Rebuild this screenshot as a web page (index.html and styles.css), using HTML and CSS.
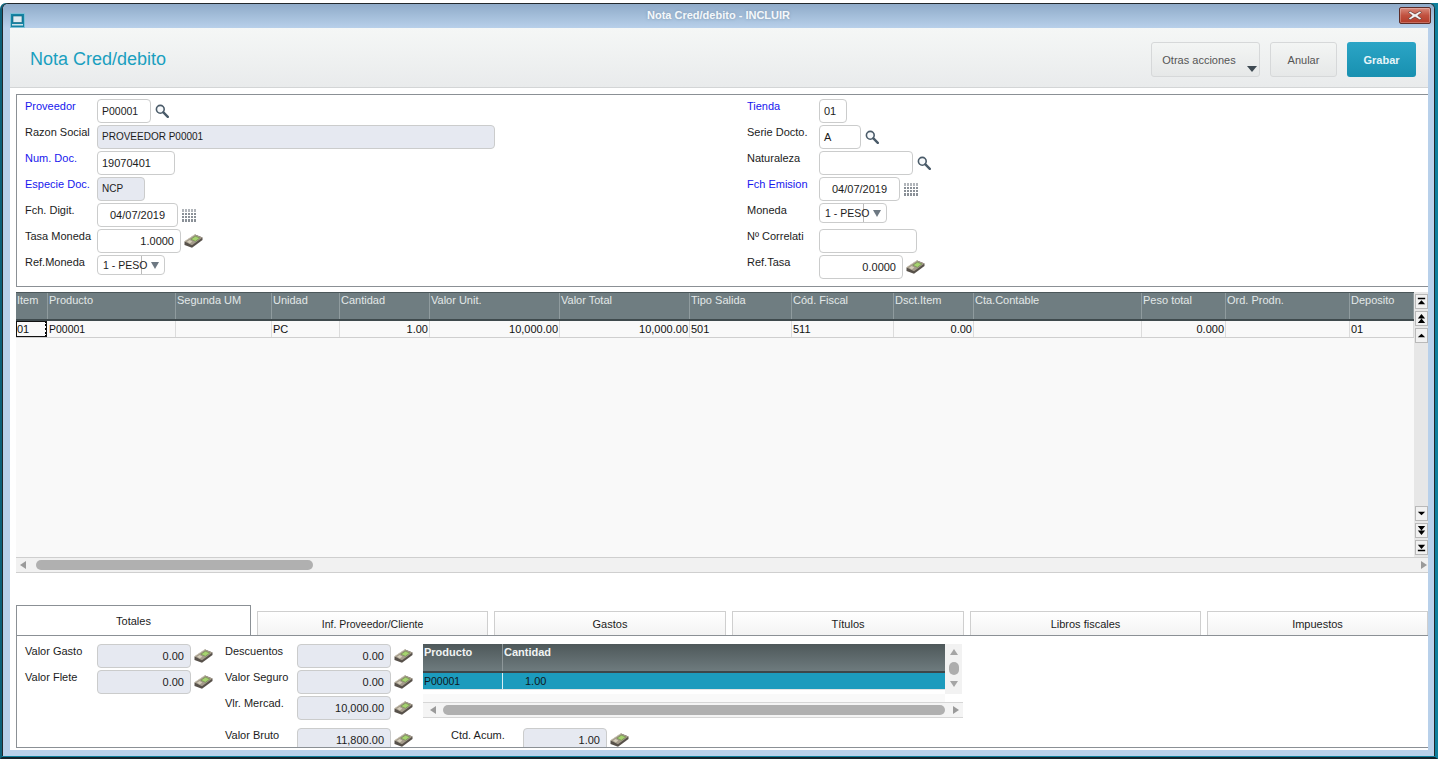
FILE: index.html
```html
<!DOCTYPE html>
<html lang="es">
<head>
<meta charset="utf-8">
<title>Nota Cred/debito - INCLUIR</title>
<link rel="stylesheet" href="styles.css">
</head>
<body>
<svg class="defs" width="0" height="0" aria-hidden="true">
  <symbol id="i-search" viewBox="0 0 14 14">
    <circle cx="5.300" cy="5.300" r="3.900" fill="#f7f9fb" stroke="#4a5b69" stroke-width="1.600"/>
    <path d="M8.400 8.400L12.800 12.800" stroke="#4a5b69" stroke-width="2.400" stroke-linecap="round"/>
  </symbol>
  <symbol id="i-money" viewBox="0 0 19 14">
    <path d="M.5 7.500L11 .5 18.500 3.500V6L8 13.800 .5 11z" fill="#57514a"/>
    <path d="M.5 7.500L11 .5 18.500 3.500 8 11.300z" fill="#a49b8b"/>
    <path d="M.5 7.500L11 .5" fill="none" stroke="#d8d2c2" stroke-width=".8"/>
    <path d="M7 5.200L11.300 2.200 15.800 4 11.400 7.300z" fill="#a6d36f" stroke="#6c8a4a" stroke-width=".6"/>
    <path d="M3 7.800l2.600-1.700 2.700 1.500-2.500 1.800z" fill="#d4cdb9"/>
  </symbol>
  <symbol id="i-cal" viewBox="0 0 14 13">
    <path d="M0 0h2v3H0zM3 0h2v3H3zM6 0h2v3H6zM9 0h2v3H9zM12 0h2v3h-2z" fill="#b1b5ba"/>
    <path d="M0 4h2v2H0zM3 4h2v2H3zM6 4h2v2H6zM9 4h2v2H9zM12 4h2v2h-2zM0 7h2v2H0zM3 7h2v2H3zM6 7h2v2H6zM9 7h2v2H9zM12 7h2v2h-2zM0 10h2v3H0zM3 10h2v3H3zM6 10h2v3H6zM9 10h2v3H9zM12 10h2v3h-2z" fill="#8a9097"/>
  </symbol>
  <symbol id="i-one-up" viewBox="0 0 12 12"><path d="M2 8h8L6 4z" fill="#000"/></symbol>
  <symbol id="i-one-down" viewBox="0 0 12 12"><path d="M2 4h8L6 8z" fill="#000"/></symbol>
  <symbol id="i-two-up" viewBox="0 0 12 12"><path d="M2 6h8L6 1zM2 11h8L6 6z" fill="#000"/></symbol>
  <symbol id="i-two-down" viewBox="0 0 12 12"><path d="M2 1h8L6 6zM2 6h8L6 11z" fill="#000"/></symbol>
  <symbol id="i-top" viewBox="0 0 12 12"><path d="M2 2h8v1.500H2zM2 9h8L6 4.500z" fill="#000"/></symbol>
  <symbol id="i-bottom" viewBox="0 0 12 12"><path d="M2 3h8L6 7.500zM2 8.500h8V10H2z" fill="#000"/></symbol>
</svg>

<div class="window">
  <div class="shell">
    <div class="titlebar">
      <span class="app-icon">
        <svg width="15" height="15" viewBox="0 0 15 15">
          <rect x="0.500" y="0.500" width="14" height="14" fill="#1584a4" stroke="#7fc0d6"/>
          <rect x="3" y="3" width="9" height="6.500" fill="#dfeaf0" stroke="#0c5f78" stroke-width="0.600"/>
          <path d="M2 11h11v1.500H2z" fill="#cfe2ea"/>
        </svg>
      </span>
      <span class="title">Nota Cred/debito - INCLUIR</span>
      <span class="close">
        <svg width="16" height="11" viewBox="0 0 14 10">
          <path d="M2.500 1L7 3.600 11.500 1 13 2.200 9.500 5 13 7.800 11.500 9 7 6.400 2.500 9 1 7.800 4.500 5 1 2.200z" fill="#f2f2f2" stroke="#5b2a24" stroke-width="0.600"/>
        </svg>
      </span>
    </div>

    <div class="sides">
      <main class="content">
        <header class="page-head">
          <h1 class="page-title">Nota Cred/debito</h1>
          <div class="actions">
            <button class="btn btn-more">Otras acciones<span class="caret"></span></button>
            <button class="btn btn-cancel">Anular</button>
            <button class="btn btn-save">Grabar</button>
          </div>
        </header>

        <section class="form-panel">
          <div class="form-col">
            <div class="field"><label class="lbl req">Proveedor</label><div class="input caps w54">P00001</div><svg class="ico-search"><use href="#i-search"/></svg></div>
            <div class="field"><label class="lbl">Razon Social</label><div class="input off tight w398">PROVEEDOR P00001</div></div>
            <div class="field"><label class="lbl req">Num. Doc.</label><div class="input w78">19070401</div></div>
            <div class="field"><label class="lbl req">Especie Doc.</label><div class="input off tight w48">NCP</div></div>
            <div class="field"><label class="lbl">Fch. Digit.</label><div class="input center w81">04/07/2019</div><svg class="ico-cal"><use href="#i-cal"/></svg></div>
            <div class="field"><label class="lbl">Tasa Moneda</label><div class="input right w84">1.0000</div><svg class="ico-money"><use href="#i-money"/></svg></div>
            <div class="field"><label class="lbl">Ref.Moneda</label><div class="select"><span class="sel-text">1 - PESO</span><span class="sel-arrow"></span></div></div>
          </div>
          <div class="form-col">
            <div class="field"><label class="lbl req">Tienda</label><div class="input w28">01</div></div>
            <div class="field"><label class="lbl">Serie Docto.</label><div class="input w42">A</div><svg class="ico-search"><use href="#i-search"/></svg></div>
            <div class="field"><label class="lbl">Naturaleza</label><div class="input w94"></div><svg class="ico-search"><use href="#i-search"/></svg></div>
            <div class="field"><label class="lbl req">Fch Emision</label><div class="input center w81">04/07/2019</div><svg class="ico-cal"><use href="#i-cal"/></svg></div>
            <div class="field"><label class="lbl">Moneda</label><div class="select"><span class="sel-text">1 - PESO</span><span class="sel-arrow"></span></div></div>
            <div class="field"><label class="lbl">Nº Correlati</label><div class="input w98"></div></div>
            <div class="field"><label class="lbl">Ref.Tasa</label><div class="input right w84">0.0000</div><svg class="ico-money"><use href="#i-money"/></svg></div>
          </div>
        </section>

        <section class="items">
          <div class="items-main">
            <div class="items-table">
              <div class="t-row t-head">
                <div>Item</div><div>Producto</div><div>Segunda UM</div><div>Unidad</div><div>Cantidad</div><div>Valor Unit.</div><div>Valor Total</div><div>Tipo Salida</div><div>Cód. Fiscal</div><div>Dsct.Item</div><div>Cta.Contable</div><div>Peso total</div><div>Ord. Prodn.</div><div>Deposito</div>
              </div>
              <div class="t-row t-body">
                <div class="focus">01</div><div class="caps">P00001</div><div></div><div>PC</div><div class="num">1.00</div><div class="num">10,000.00</div><div class="num">10,000.00</div><div>501</div><div>511</div><div class="num">0.00</div><div></div><div class="num">0.000</div><div></div><div>01</div>
              </div>
            </div>
            <div class="vbar">
              <div class="vgroup">
                <span class="vbtn"><svg><use href="#i-top"/></svg></span>
                <span class="vbtn"><svg><use href="#i-two-up"/></svg></span>
                <span class="vbtn"><svg><use href="#i-one-up"/></svg></span>
              </div>
              <div class="vgroup">
                <span class="vbtn"><svg><use href="#i-one-down"/></svg></span>
                <span class="vbtn"><svg><use href="#i-two-down"/></svg></span>
                <span class="vbtn"><svg><use href="#i-bottom"/></svg></span>
              </div>
            </div>
          </div>
          <div class="hbar">
            <span class="arrow-left"></span>
            <div class="hthumb"></div>
            <span class="arrow-right"></span>
          </div>
        </section>

        <nav class="tabs">
          <div class="tab active">Totales</div>
          <div class="tab w231 caps">Inf. Proveedor/Cliente</div>
          <div class="tab w232">Gastos</div>
          <div class="tab w232">Títulos</div>
          <div class="tab w231">Libros fiscales</div>
          <div class="tab w221">Impuestos</div>
        </nav>

        <section class="tab-panel">
          <div class="tot-col col-a">
            <div class="field"><label class="lbl">Valor Gasto</label><div class="input off right w94">0.00</div><svg class="ico-money"><use href="#i-money"/></svg></div>
            <div class="field"><label class="lbl">Valor Flete</label><div class="input off right w94">0.00</div><svg class="ico-money"><use href="#i-money"/></svg></div>
          </div>
          <div class="tot-col col-b">
            <div class="field"><label class="lbl">Descuentos</label><div class="input off right w94">0.00</div><svg class="ico-money"><use href="#i-money"/></svg></div>
            <div class="field"><label class="lbl">Valor Seguro</label><div class="input off right w94">0.00</div><svg class="ico-money"><use href="#i-money"/></svg></div>
            <div class="field"><label class="lbl">Vlr. Mercad.</label><div class="input off right w94">10,000.00</div><svg class="ico-money"><use href="#i-money"/></svg></div>
            <div class="field gap-top"><label class="lbl">Valor Bruto</label><div class="input off right w94">11,800.00</div><svg class="ico-money"><use href="#i-money"/></svg></div>
          </div>
          <div class="tot-col col-c">
            <div class="mini">
              <div class="mini-top">
                <div class="mini-table">
                  <div class="mini-head"><div>Producto</div><div>Cantidad</div></div>
                  <div class="mini-row"><div class="caps">P00001</div><div class="mini-qty">1.00</div></div>
                </div>
                <div class="mini-vbar">
                  <span class="tri-up"></span>
                  <span class="mini-vthumb"></span>
                  <span class="tri-down"></span>
                </div>
              </div>
              <div class="mini-blank"></div>
              <div class="mini-hbar">
                <span class="arrow-left"></span>
                <div class="mini-hthumb"></div>
                <span class="arrow-right"></span>
              </div>
            </div>
            <div class="field acum"><label class="lbl">Ctd. Acum.</label><div class="input off right w84">1.00</div><svg class="ico-money"><use href="#i-money"/></svg></div>
          </div>
        </section>
      </main>
    </div>
  </div>
</div>
</body>
</html>
```

FILE: styles.css
```css
* { box-sizing: border-box; }

html, body {
  margin: 0;
  padding: 0;
  background: #fff;
  overflow: hidden;
}

body {
  font-family: "Liberation Sans", Arial, sans-serif;
  font-size: 11px;
  color: #1c1c1c;
}

.defs { position: absolute; }

.window {
  width: 1438px;
  height: 756px;
  margin-top: 3px;
  padding-bottom: 1px;
  background: #0f7f9c;
  border-left: 2px solid #0c6078;
  border-right: 3px solid #0f7f9c;
  border-bottom: 2px solid #12222a;
  border-top-left-radius: 6px;
}

.shell {
  height: 100%;
  border: 1px solid #22282c;
  border-bottom: 0;
  border-radius: 6px 6px 0 0;
  background: #b8d0ea;
  overflow: hidden;
}

/* title bar */
.titlebar {
  height: 24px;
  display: flex;
  align-items: flex-start;
  padding: 3px 3px 0 7px;
  background: linear-gradient(#8fabc9, #b8d0ea);
}

.app-icon { height: 15px; margin-top: 6px; flex: none; display: flex; }

.title {
  flex: 1;
  margin-left: 13px;
  padding-top: 2px;
  text-align: center;
  font-size: 11px;
  font-weight: bold;
  color: #f4f8fb;
  text-shadow: 0 0 3px #7f97b0;
}

.close {
  flex: none;
  width: 32px;
  height: 17px;
  display: flex;
  align-items: center;
  justify-content: center;
  background: linear-gradient(#d98a7c, #c1513f 50%, #b23c2a);
  border: 1px solid #5d2d28;
  border-radius: 2px;
  box-shadow: inset 0 0 0 1px rgba(255, 255, 255, .25);
}

.sides {
  height: 728px;
  padding: 0 6px 6px 7px;
}

.content {
  height: 722px;
  background: #fff;
  overflow: hidden;
}

/* page header */
.page-head {
  height: 60px;
  display: flex;
  justify-content: space-between;
  padding: 14px 12px 0 20px;
  background: linear-gradient(#f5f7f6, #e9ebec);
  border-bottom: 1px solid #d3d5d6;
}

.page-title {
  margin: 3px 0 0;
  font-size: 18px;
  font-weight: normal;
  line-height: 28px;
  color: #1a9fbf;
}

.actions { display: flex; gap: 10px; }

.btn {
  height: 35px;
  padding: 0;
  font-family: inherit;
  font-size: 11px;
  border-radius: 3px;
  border: 1px solid #d6d8d9;
  background: linear-gradient(#f3f5f4, #e6e8e8);
  color: #555;
  position: relative;
}

.btn-more { width: 109px; padding-right: 13px; }
.btn-cancel { width: 67px; }

.btn-save {
  width: 69px;
  border: 0;
  font-weight: bold;
  color: #e6f5f9;
  background: linear-gradient(#2ba5c6, #1890b0);
}

.caret {
  position: absolute;
  right: 2px;
  top: 23px;
  border-left: 5px solid transparent;
  border-right: 5px solid transparent;
  border-top: 6px solid #3e4a52;
}

/* form panel */
.form-panel {
  margin: 6px 0 0 6px;
  height: 193px;
  padding: 4px 0 0 8px;
  display: flex;
  border: 1px solid #8b9095;
  border-right: 0;
}

.form-col { width: 722px; flex: none; }

.field {
  display: flex;
  align-items: flex-start;
  height: 26px;
}

.lbl {
  flex: none;
  width: 72px;
  line-height: 14px;
  white-space: nowrap;
}

.req { color: #1717ee; }

.input {
  height: 24px;
  flex: none;
  padding: 0 4px;
  line-height: 22px;
  white-space: nowrap;
  background: #fff;
  border: 1px solid #cbcccc;
  border-radius: 4px;
}

.caps { font-size: 10.5px; }
.tight { font-size: 10px; }
.off { background: #e6e9f1; }
.right { text-align: right; padding-right: 6px; }
.center { text-align: center; }

.w28 { width: 28px; }
.w42 { width: 42px; }
.w48 { width: 48px; }
.w54 { width: 54px; }
.w78 { width: 78px; }
.w81 { width: 81px; }
.w84 { width: 84px; }
.w94 { width: 94px; }
.w98 { width: 98px; }
.w398 { width: 398px; }

.select {
  width: 68px;
  height: 20px;
  flex: none;
  display: flex;
  background: #fff;
  border: 1px solid #cbcccc;
  border-radius: 4px;
  line-height: 18px;
}

.sel-text {
  width: 44px;
  flex: none;
  padding-left: 5px;
  font-size: 10.5px;
  white-space: nowrap;
  border-right: 1px solid #bbb;
}

.sel-arrow {
  margin: 6px 0 0 9px;
  width: 0;
  height: 0;
  border-left: 4.500px solid transparent;
  border-right: 4.500px solid transparent;
  border-top: 7px solid #6d7882;
}

.ico-search { width: 14px; height: 14px; margin: 5px 0 0 4px; flex: none; }
.ico-cal { width: 14px; height: 13px; margin: 6px 0 0 4px; flex: none; }
.ico-money { width: 19px; height: 14px; margin: 5px 0 0 3px; flex: none; }

/* items grid */
.items {
  margin: 5px 0 0 6px;
  height: 281px;
}

.items-main {
  display: flex;
  height: 265px;
}

.items-table {
  width: 1398px;
  flex: none;
  background: #f9f9f9;
}

.t-row {
  display: grid;
  grid-template-columns: 32px 128px 96px 68px 90px 130px 130px 102px 102px 80px 168px 84px 124px 64px;
}

.t-row > div {
  white-space: nowrap;
  overflow: hidden;
}

.t-head {
  height: 29px;
  background: #6f7d81;
  border-top: 1px solid #4b575a;
  border-bottom: 2px solid #3f4a4d;
  color: #e2e8e8;
  line-height: 15px;
}

.t-head > div {
  border-right: 1px solid #8f9b9e;
  padding-left: 1px;
}

.t-body {
  height: 17px;
  line-height: 16px;
  border-bottom: 1px solid #cfcfcf;
  color: #111;
}

.t-body > div {
  border-right: 1px solid #dcdcdc;
  padding-left: 1px;
}

.t-body > .num { text-align: right; padding-right: 1px; }

.t-body > .focus {
  outline: 1px solid #111;
  outline-offset: -1px;
  margin-right: 1px;
  border-right: 2px dotted #000;
}

.vbar {
  width: 14px;
  flex: none;
  padding: 2px 0 2px 1px;
  display: flex;
  flex-direction: column;
  justify-content: space-between;
  background: #e7e7e7;
}

.vgroup { display: flex; flex-direction: column; gap: 2px; }

.vbtn {
  width: 13px;
  height: 15px;
  display: flex;
  align-items: center;
  justify-content: center;
  background: #f1f1f1;
  border: 1px solid #b9b9b9;
}

.vbtn svg { width: 11px; height: 11px; }

.hbar {
  height: 16px;
  display: flex;
  align-items: center;
  padding: 0 1px 0 4px;
  background: #f1f1f1;
  border-top: 1px solid #cfcfcf;
  border-bottom: 1px solid #cfcfcf;
}

.hthumb {
  width: 277px;
  height: 10px;
  margin-left: 10px;
  border-radius: 5px;
  background: #b0b0b0;
}

.arrow-left, .arrow-right {
  width: 0;
  height: 0;
  flex: none;
  border-top: 4px solid transparent;
  border-bottom: 4px solid transparent;
}

.arrow-left { border-right: 6px solid #9a9a9a; }
.arrow-right { border-left: 6px solid #9a9a9a; margin-left: auto; }

/* tabs */
.tabs {
  margin: 32px 0 0 6px;
  height: 30px;
  display: flex;
  align-items: flex-end;
  gap: 6px;
}

.tab {
  flex: none;
  height: 24px;
  line-height: 24px;
  text-align: center;
  background: linear-gradient(#fff, #f3f3f3);
  border: 1px solid #cfcfcf;
  border-bottom: 0;
}

.tab.active {
  width: 235px;
  height: 30px;
  line-height: 30px;
  padding-bottom: 3px;
  background: #fff;
  border-color: #8b9095;
}

.w231 { width: 231px; }
.w232 { width: 232px; }
.w221 { width: 221px; }

.tab-panel {
  margin-left: 6px;
  height: 113px;
  display: flex;
  padding: 8px 0 0 8px;
  overflow: hidden;
  border: 1px solid #8b9095;
  border-right: 0;
}

.tot-col { flex: none; }
.col-a { width: 200px; }
.col-b { width: 198px; }
.col-c { width: 540px; }

.gap-top { margin-top: 6px; }

.mini { width: 540px; }

.mini-top { display: flex; height: 50px; }

.mini-table { width: 522px; flex: none; }

.mini-head, .mini-row {
  display: grid;
  grid-template-columns: 80px 442px;
}

.mini-head {
  height: 29px;
  background: linear-gradient(#4e585a, #6e7b7e);
  border-bottom: 2px solid #3d4649;
  font-weight: bold;
  line-height: 16px;
  color: #f0f3f3;
}

.mini-head > div { padding-left: 1px; }
.mini-head > div:first-child { border-right: 1px solid #8d9799; }

.mini-row {
  height: 17px;
  line-height: 16px;
  background: #1c9bbd;
  color: #10181b;
  border-bottom: 1px solid #e4e4e4;
}

.mini-row > div { padding-left: 1px; }
.mini-row > div:first-child { border-right: 1px solid #d8eef4; }
.mini-row > .mini-qty { padding-left: 22px; }

.mini-vbar {
  width: 17px;
  flex: none;
  display: flex;
  flex-direction: column;
  align-items: center;
  padding-top: 5px;
  background: #f2f2f2;
}

.tri-up, .tri-down {
  width: 0;
  height: 0;
  border-left: 4px solid transparent;
  border-right: 4px solid transparent;
}

.tri-up { border-bottom: 6px solid #a5a5a5; }
.tri-down { border-top: 6px solid #a5a5a5; margin-top: 6px; }

.mini-vthumb {
  width: 10px;
  height: 13px;
  margin-top: 7px;
  border-radius: 5px;
  background: #adadad;
}

.mini-blank { width: 522px; height: 8px; background: #f9f9f9; }

.mini-hbar {
  height: 16px;
  display: flex;
  align-items: center;
  padding: 0 4px 0 7px;
  background: #f4f4f4;
  border-top: 1px solid #d6d6d6;
  border-bottom: 1px solid #d6d6d6;
}

.mini-hthumb {
  width: 502px;
  height: 10px;
  margin-left: 7px;
  border-radius: 5px;
  background: #b0b0b0;
}

.acum { margin: 10px 0 0 28px; }
```
